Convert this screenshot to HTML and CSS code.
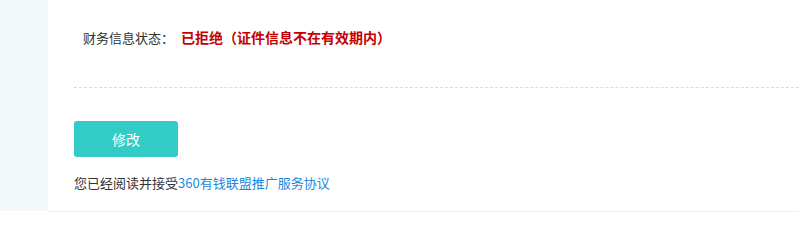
FILE: index.html
```html
<!DOCTYPE html>
<html lang="zh-CN">
<head>
<meta charset="utf-8">
<title>财务信息</title>
<link rel="stylesheet" href="styles.css">
</head>
<body>
<div class="page">
  <aside class="sidebar"></aside>
  <main class="main">
    <div class="status">
      <span class="status-label">财务信息状态：</span>
      <span class="status-value">已拒绝（证件信息不在有效期内）</span>
    </div>
    <div class="divider"></div>
    <button class="btn" type="button">修改</button>
    <p class="agree">您已经阅读并接受<a class="agree-link" href="#">360有钱联盟推广服务协议</a></p>
  </main>
</div>
</body>
</html>
```
FILE: styles.css
```css
* { box-sizing: border-box; }
html, body {
  margin: 0;
  padding: 0;
  background: #fff;
  font-family: "Noto Sans CJK SC", "Microsoft YaHei", "Liberation Sans", sans-serif;
  color: #333;
}
.page {
  display: flex;
  height: 212px;
}
.sidebar {
  width: 48px;
  flex: none;
  background: #f3f9fa;
  border-bottom: 1px solid #fff;
}
.main {
  flex: 1;
  padding: 27px 0 0 26px;
  border-bottom: 1px solid #eceff3;
}
.status {
  display: flex;
  align-items: center;
  height: 20px;
  padding-left: 9px;
}
.status-label {
  width: 98px;
  font-size: 13px;
  color: #333;
}
.status-value {
  font-size: 14px;
  font-weight: bold;
  color: #c40000;
}
.divider {
  margin-top: 40px;
  border-top: 1px dashed #dcdcdc;
}
.btn {
  display: block;
  margin-top: 33px;
  width: 104px;
  height: 36px;
  border: none;
  border-radius: 3px;
  background: #33cbc6;
  color: #fff;
  font-family: inherit;
  font-size: 14px;
  font-weight: normal;
  padding: 0;
}
.agree {
  margin: 16px 0 0;
  font-size: 13px;
  line-height: 20px;
  color: #333;
}
.agree-link {
  color: #1a88e0;
  text-decoration: none;
}
```
